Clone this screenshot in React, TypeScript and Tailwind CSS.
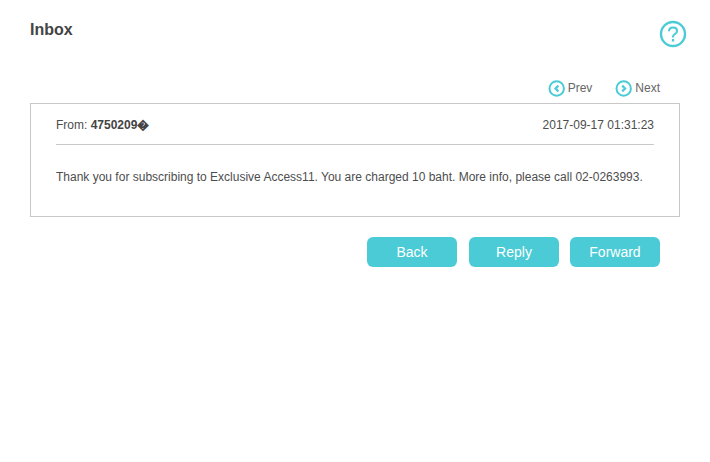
function CircleNav({ dir }: { dir: "prev" | "next" }) {
  return (
    <svg width="17" height="17" viewBox="0 0 17 17" fill="none">
      <circle cx="8.7" cy="8.5" r="7.2" stroke="#4acbd6" strokeWidth="2" />
      <path
        d={dir === "prev" ? "M10.4 5.6 7.5 8.5l2.9 2.9" : "M7.2 5.6l2.9 2.9-2.9 2.9"}
        stroke="#4acbd6"
        strokeWidth="2.2"
      />
    </svg>
  );
}

function HelpIcon() {
  return (
    <svg width="28" height="28" viewBox="0 0 28 28" fill="none">
      <circle cx="14" cy="14" r="12" stroke="#4acbd6" strokeWidth="2.4" />
      <path
        d="M10 11.2c0-2.4 1.8-3.7 4-3.7s4 1.3 4 3.4c0 1.5-.9 2.3-2.1 3.1-1.2.8-1.9 1.4-1.9 2.8v.6"
        stroke="#4acbd6"
        strokeWidth="2.1"
      />
      <rect x="12.9" y="19" width="2.3" height="2.5" fill="#4acbd6" />
    </svg>
  );
}

export default function App() {
  return (
    <main className="w-[710px] h-[462px] bg-white px-[30px] font-['Liberation_Sans',Arial,sans-serif] text-[#4d4d4d]">
      <div className="flex justify-between pt-5">
        <h1 className="text-base leading-[20px] font-bold text-[#444]">Inbox</h1>
        <div className="mr-[-7px]">
          <HelpIcon />
        </div>
      </div>

      <div className="flex justify-end gap-[23px] pr-5 mt-[32px] h-[17px] text-xs leading-[17px] text-[#666]">
        <div className="flex items-center gap-[3px]">
          <CircleNav dir="prev" />
          Prev
        </div>
        <div className="flex items-center gap-[3px]">
          <CircleNav dir="next" />
          Next
        </div>
      </div>

      <section className="mt-[6px] h-[114px] border border-[#c8c8c8] px-[25px]">
        <div className="flex justify-between h-[41px] pt-[14px] border-b border-[#c8c8c8] text-xs leading-[15px]">
          <div>
            From: <span className="font-bold text-[#444]">4750209�</span>
          </div>
          <div>2017-09-17 01:31:23</div>
        </div>
        <p className="mt-[25px] text-xs leading-[15px]">
          Thank you for subscribing to Exclusive Access11. You are charged 10 baht. More info, please call 02-0263993.
        </p>
      </section>

      <div className="flex justify-end pr-5 mt-5 text-white text-sm">
        <button className="w-[90px] h-[30px] rounded-md bg-[#4acbd6]">Back</button>
        <button className="w-[90px] h-[30px] rounded-md bg-[#4acbd6] ml-3">Reply</button>
        <button className="w-[90px] h-[30px] rounded-md bg-[#4acbd6] ml-[11px]">Forward</button>
      </div>
    </main>
  );
}
